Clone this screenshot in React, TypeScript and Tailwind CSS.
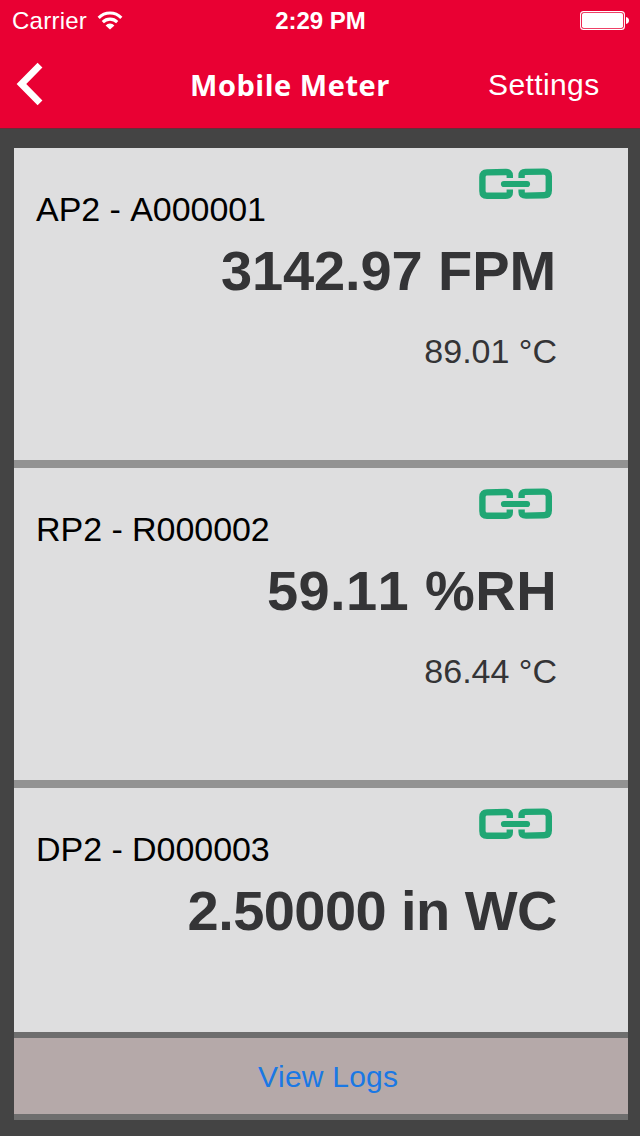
import React from 'react';

interface Meter {
  id: string;
  label: string;
  value: string;
  valueClass: string;
  temperature?: string;
}

const METERS: Meter[] = [
  {
    id: 'ap2',
    label: 'AP2 - A000001',
    value: '3142.97 FPM',
    valueClass: 'mr-[2px] tracking-[-0.1px]',
    temperature: '89.01 °C',
  },
  {
    id: 'rp2',
    label: 'RP2 - R000002',
    value: '59.11 %RH',
    valueClass: 'mr-[1px] tracking-[0.4px]',
    temperature: '86.44 °C',
  },
  {
    id: 'dp2',
    label: 'DP2 - D000003',
    value: '2.50000 in WC',
    valueClass: 'mr-[1px] tracking-[-0.55px]',
  },
];

const WifiIcon: React.FC = () => (
  <svg width="26" height="20" viewBox="0 0 26 20" fill="none" stroke="white" strokeWidth="3.1">
    <path d="M1.7 6.8a15.8 15.8 0 0 1 22.6 0" />
    <path d="M5.8 11.1a10.2 10.2 0 0 1 14.4 0" />
    <path d="M13 18.6l-4.4-4.2a6 6 0 0 1 8.8 0z" fill="white" stroke="none" />
  </svg>
);

const BatteryIcon: React.FC = () => (
  <svg width="49" height="19" viewBox="0 0 49 19">
    <rect x="0.6" y="0.6" width="43.8" height="17.8" rx="3" fill="none" stroke="white" strokeWidth="1.1" />
    <rect x="2" y="2" width="41" height="15" rx="1.8" fill="white" />
    <path d="M46 6c2 .4 3 1.8 3 3.5s-1 3.1-3 3.5z" fill="white" />
  </svg>
);

const LinkIcon: React.FC = () => (
  <svg width="74" height="32" viewBox="0 0 74 32" fill="none" stroke="#20a774" strokeWidth="6.4">
    <path d="M30.8 10V7.5Q30.8 4 27 4L8 4.4Q3.4 4.4 3.4 9V23Q3.4 27.8 8 27.8H26.5Q30.8 27.8 30.8 24V21.5" />
    <path d="M42.6 10V7.5Q42.6 4 46.5 3.9L65 3.6Q69.8 3.6 69.8 8.3V22.5Q69.8 27.3 65 27.3L47 27.6Q42.6 27.6 42.6 24V21.5" />
    <path d="M25 16H48" strokeWidth="6.2" strokeLinecap="round" />
  </svg>
);

const MeterCard: React.FC<{ meter: Meter }> = ({ meter }) => (
  <div className="h-[312px] shrink-0 bg-[#dededf] pl-[22px] pr-[70px] pt-[20px]">
    <div className="flex items-start justify-between">
      <h2 className="mt-[21px] text-[34px] leading-[40px] tracking-[-0.05px] text-black">{meter.label}</h2>
      <div className="mr-[5px]">
        <LinkIcon />
      </div>
    </div>
    <p
      className={`mt-[10px] whitespace-nowrap text-right text-[56px] font-bold leading-[64px] text-[#343436] ${meter.valueClass}`}
    >
      {meter.value}
    </p>
    {meter.temperature && (
      <p className="mr-[1px] mt-[28px] text-right text-[34px] leading-[40px] text-[#343436]">{meter.temperature}</p>
    )}
  </div>
);

export default function App() {
  return (
    <div className="flex h-[1136px] w-[640px] flex-col overflow-hidden bg-[#444444] font-['Liberation_Sans',Arial,sans-serif] [font-kerning:none]">
      <header className="h-[129px] shrink-0 border-b border-[#6b2a38] bg-[#e90033] text-white">
        {/* Status bar */}
        <div className="grid h-[40px] grid-cols-3 items-center pl-[12px] pr-[11px]">
          <div className="flex items-center gap-[10px] text-[24px] leading-[40px] tracking-[0.25px]">
            <span className="pt-[1px]">Carrier</span>
            <WifiIcon />
          </div>
          <span className="pt-[1px] text-center text-[24px] font-bold leading-[40px]">2:29 PM</span>
          <div className="flex justify-end">
            <BatteryIcon />
          </div>
        </div>

        {/* Navigation bar */}
        <div className="grid h-[88px] grid-cols-[150px_280px_1fr] items-center">
          <button className="ml-[16px] w-[28px]" aria-label="Back">
            <svg width="28" height="44" viewBox="0 0 28 44" fill="none" stroke="white" strokeWidth="6.8">
              <path d="M24 3.2L5.4 22L24 40.8" />
            </svg>
          </button>
          <h1 className="whitespace-nowrap pt-[2px] text-center font-['Open_Sans',sans-serif] text-[29px] font-bold leading-[40px] tracking-[0.55px]">
            Mobile Meter
          </h1>
          <button className="ml-[58px] pt-[1px] text-left text-[30px] leading-[40px] tracking-[0.4px]">Settings</button>
        </div>
      </header>

      <main className="ml-[14px] mr-[12px] mt-[19px] flex h-[972px] flex-col">
        <div className="flex h-[884px] flex-col gap-[8px] overflow-hidden bg-[#929292]">
          {METERS.map((meter) => (
            <MeterCard key={meter.id} meter={meter} />
          ))}
        </div>
        <button className="h-[88px] border-y-[6px] border-[#6e6e6e] bg-[#b5a9a9] pl-[14px] text-center text-[30px] leading-[76px] tracking-[0.2px] text-[#1a78e4]">
          <span className="block pt-[1px] leading-[75px]">View Logs</span>
        </button>
      </main>
    </div>
  );
}
